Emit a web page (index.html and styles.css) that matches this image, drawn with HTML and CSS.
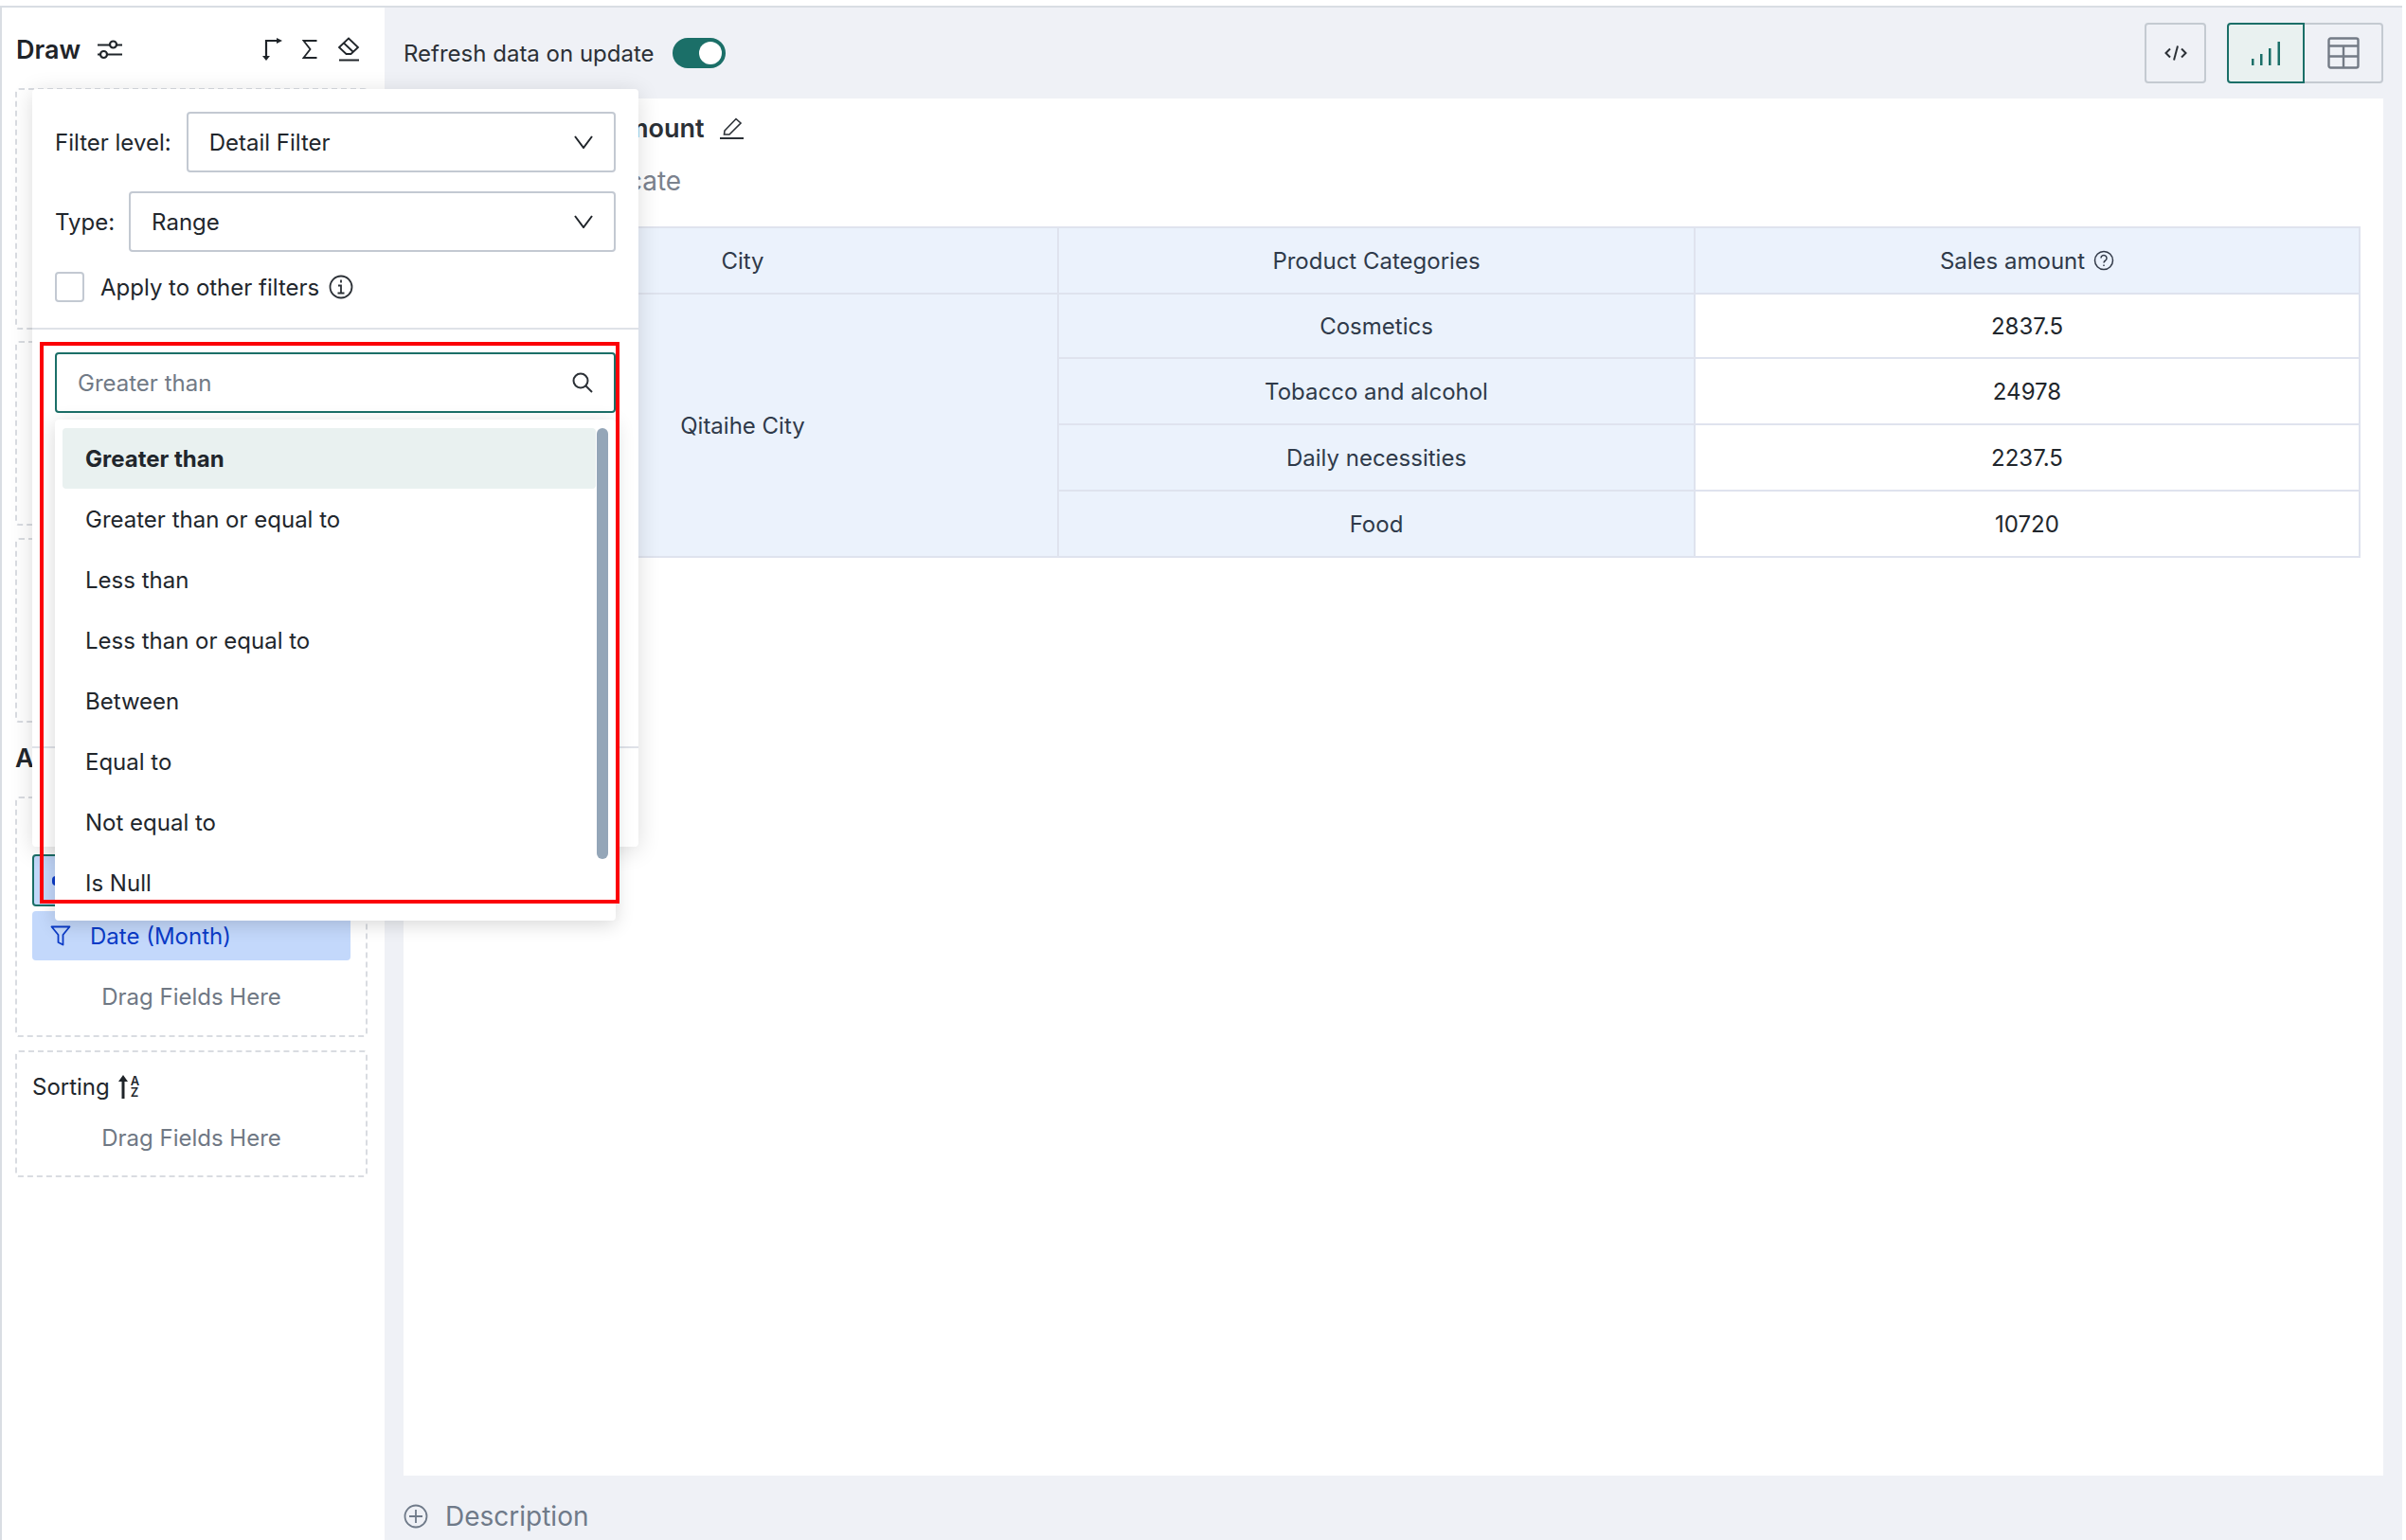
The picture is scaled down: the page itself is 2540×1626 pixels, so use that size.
FILE: index.html
```html
<!DOCTYPE html>
<html lang="en">
<head>
<meta charset="utf-8">
<title>Draw</title>
<link rel="stylesheet" href="styles.css">
</head>
<body>
<div class="app">
  <aside class="side">
    <div class="side-head">
      <span class="draw">Draw</span>
      <svg class="i-tune" viewBox="0 0 26 21" width="26" height="21" fill="none" stroke="#1f2429" stroke-width="2.200"><path d="M0 5.500h13M20 5.500h6M0 15.500h3M10 15.500h16"/><circle cx="16.500" cy="5" r="3.500"/><circle cx="6.500" cy="15.500" r="3.500"/></svg>
      <span class="spacer"></span>
      <svg class="i-swap" viewBox="0 0 22 24" width="22" height="24" fill="none" stroke="#1f2429" stroke-width="2.200"><path d="M4 21V3h13"/><path d="M15 0l6 3-6 3z" fill="#1f2429" stroke="none"/><path d="M0 19l4 5 4-5z" fill="#1f2429" stroke="none"/></svg>
      <svg class="i-sum" viewBox="0 0 16 22" width="16" height="22" fill="none" stroke="#1f2429" stroke-width="1.800"><path d="M15.500 2H1.500l7 9-7 9h14"/></svg>
      <svg class="i-erase" viewBox="0 0 24 26" width="24" height="26" fill="none" stroke="#1f2429" stroke-width="1.800"><path d="M12 1.500l10 9.500-7.500 7h-5L2 11zM7 6.500l10 9.500"/><path d="M2 24.500h21" stroke-width="2"/></svg>
    </div>
    <div class="well well-1"></div>
    <div class="well well-2"></div>
    <div class="well well-3"></div>
    <div class="section">A</div>
    <div class="well well-4">
      <div class="chip chip-active"><i class="dot"></i></div>
      <div class="chip">
        <svg viewBox="0 0 22 22" width="22" height="22" fill="none" stroke="#0b3bc7" stroke-width="1.800" stroke-linejoin="round"><path d="M1.500 1.500h19L13.500 10v10.500l-5-2.500V10z"/></svg>
        <span>Date (Month)</span>
      </div>
      <div class="drag">Drag Fields Here</div>
    </div>
    <div class="well well-5">
      <div class="sorting">
        <span>Sorting</span>
        <svg class="i-up" viewBox="0 0 10 25" width="10" height="25" fill="#1f2429"><path d="M3.500 25V7H0L5 0l5 7H6.500v18z"/></svg>
        <span class="az"><b>A</b><b>Z</b></span>
      </div>
      <div class="drag">Drag Fields Here</div>
    </div>
  </aside>

  <main class="main">
    <div class="top">
      <span class="refresh">Refresh data on update</span>
      <span class="toggle"><i></i></span>
      <span class="spacer"></span>
      <button class="btn btn-code">
        <svg viewBox="0 0 24 16" width="24" height="16" fill="none" stroke="#2b3036" stroke-width="2"><path d="M6 3.500L1.500 8 6 12.500M18 3.500L22.500 8 18 12.500"/><path d="M14 .5L10 15.500"/></svg>
      </button>
      <button class="btn btn-chart">
        <svg viewBox="0 0 30 25" width="30" height="25" fill="#1b6f68"><rect x="0" y="18" width="2.500" height="7"/><rect x="9" y="13" width="2.500" height="12"/><rect x="18" y="7" width="2.500" height="18"/><rect x="27.500" y="0" width="2.500" height="25"/></svg>
      </button>
      <button class="btn btn-table">
        <svg viewBox="0 0 34 34" width="34" height="34" fill="none" stroke="#747b86" stroke-width="2.400"><rect x="1.500" y="1.500" width="31" height="31" rx="2"/><path d="M1.500 9.500h31M1.500 20.500h31M17 9.500v23"/></svg>
      </button>
    </div>
    <div class="content">
      <div class="title-row">
        <span class="title">Monthly Sales amount</span>
        <svg viewBox="0 0 26 24" width="26" height="24" fill="none" stroke="#2b3036" stroke-width="1.600"><path d="M5 15L17 2.500l5 4.500L10 19H4.500z"/><path d="M0 23h25" stroke-width="2"/></svg>
      </div>
      <div class="subtitle">Click to add indicate</div>
      <table class="grid">
        <colgroup><col class="c1"><col class="c2"><col class="c3"></colgroup>
        <thead>
          <tr class="r-head"><th>City</th><th>Product Categories</th><th><span class="amount">Sales amount
            <svg viewBox="0 0 22 22" width="22" height="22" fill="none" stroke="#323a48" stroke-width="1.500"><circle cx="11" cy="11" r="9.500"/><path d="M8 8.500a3 3 0 1 1 4.700 2.500c-1.100.7-1.700 1.300-1.700 2.500"/><path d="M11 15.500v1.500"/></svg></span></th></tr>
        </thead>
        <tbody>
          <tr class="r-1"><th rowspan="4">Qitaihe City</th><th>Cosmetics</th><td>2837.5</td></tr>
          <tr class="r-n"><th>Tobacco and alcohol</th><td>24978</td></tr>
          <tr class="r-n"><th>Daily necessities</th><td>2237.5</td></tr>
          <tr class="r-n"><th>Food</th><td>10720</td></tr>
        </tbody>
      </table>
    </div>
    <div class="desc">
      <svg viewBox="0 0 26 26" width="26" height="26" fill="none" stroke="#6f7a89" stroke-width="1.800"><circle cx="13" cy="13" r="11.500"/><path d="M13 6v14M6 13h14"/></svg>
      <span>Description</span>
    </div>
  </main>
</div>

<section class="pop">
  <div class="pop-form">
    <div class="pop-row">
      <label>Filter level:</label>
      <div class="select"><span>Detail Filter</span><svg viewBox="0 0 20 14" width="20" height="14" fill="none" stroke="#1f2429" stroke-width="2"><path d="M1 1l9 12 9-12"/></svg></div>
    </div>
    <div class="pop-row pop-row-type">
      <label>Type:</label>
      <div class="select"><span>Range</span><svg viewBox="0 0 20 14" width="20" height="14" fill="none" stroke="#1f2429" stroke-width="2"><path d="M1 1l9 12 9-12"/></svg></div>
    </div>
    <div class="apply">
      <span class="check"></span>
      <span>Apply to other filters</span>
      <svg viewBox="0 0 26 26" width="26" height="26" fill="none" stroke="#2b3036" stroke-width="1.800"><circle cx="13" cy="13" r="11.500"/><path d="M13 5.500v3M10 11.500h3v8M9.500 19.500h7"/></svg>
    </div>
  </div>
</section>

<div class="search">
  <span>Greater than</span>
  <svg viewBox="0 0 22 22" width="22" height="22" fill="none" stroke="#2b3036" stroke-width="2"><circle cx="9" cy="9" r="7.500"/><path d="M14.500 14.500l6.500 6.500"/></svg>
</div>
<div class="menu">
  <ul class="menu-list">
    <li class="on">Greater than</li>
    <li>Greater than or equal to</li>
    <li>Less than</li>
    <li>Less than or equal to</li>
    <li>Between</li>
    <li>Equal to</li>
    <li>Not equal to</li>
    <li>Is Null</li>
  </ul>
  <i class="thumb"></i>
</div>
<div class="redbox"></div>
</body>
</html>
```
FILE: styles.css
```css
* { box-sizing: border-box; }
html, body { margin: 0; padding: 0; width: 2540px; height: 1626px; overflow: hidden; background: #fff; }
body { font-family: Inter, "Liberation Sans", sans-serif; font-size: 24px; color: #21262c; position: relative; }
button { font: inherit; padding: 0; background: none; }
.spacer { flex: 1; }

.app { display: flex; height: 1620px; margin-top: 6px; margin-right: 4px; border-top: 2px solid #d9dde3; border-left: 2px solid #d9dde3; }

.side { width: 404px; flex: none; background: #fff; padding: 0 18px 0 14px; }
.side-head { height: 85px; display: flex; align-items: center; padding: 3px 0 0 1px; }
.draw { font-size: 27px; font-weight: 600; color: #1f2429; }
.i-tune { margin-left: 18px; }
.i-swap { margin-right: 20px; }
.i-sum { margin-right: 21px; }
.i-erase { margin-right: 8px; }

.well { border: 2px dashed #d9dce1; border-radius: 4px; }
.well-1 { height: 255px; margin-bottom: 12px; }
.well-2 { height: 195px; margin-bottom: 13px; }
.well-3 { height: 195px; }
.section { font-size: 27px; font-weight: 600; height: 78px; line-height: 76px; }
.well-4 { height: 254px; margin-bottom: 14px; padding: 59px 16px 0; }
.well-5 { height: 134px; }

.chip { height: 52px; width: 336px; background: #c3d8fb; color: #0b3bc7; border-radius: 4px; display: flex; align-items: center; padding-left: 19px; gap: 20px; margin-bottom: 5px; font-size: 24px; }
.chip-active { height: 55px; border: 2px solid #1b6f68; position: relative; }
.dot { width: 8px; height: 10px; border-radius: 4px; background: #0b3bc7; }
.drag { color: #6f7884; text-align: center; font-size: 24px; height: 62px; line-height: 62px; margin-top: 8px; }
.well-5 .drag { margin-top: 0; height: 38px; line-height: 38px; }
.sorting { display: flex; align-items: center; height: 72px; padding-left: 16px; gap: 8px; font-size: 24px; }
.i-up { margin-left: 1px; margin-right: -5px; }
.az { display: flex; flex-direction: column; font-size: 13px; line-height: 12px; }
.az b { font-weight: 600; }

.main { flex: 1; background: #eff1f6; display: flex; flex-direction: column; padding: 0 20px; }
.top { height: 96px; flex: none; display: flex; align-items: center; }
.refresh { font-size: 24px; color: #2b3036; }
.toggle { width: 56px; height: 32px; border-radius: 16px; background: #1b6f68; margin-left: 19px; display: flex; justify-content: flex-end; align-items: center; padding-right: 4px; }
.toggle i { width: 24px; height: 24px; border-radius: 50%; background: #fff; }
.btn { height: 64px; border: 2px solid #c4cad1; display: flex; align-items: center; justify-content: center; }
.btn-code { width: 65px; border-radius: 4px; margin-right: 22px; }
.btn-chart { width: 82px; border: 2px solid #1b6f68; border-radius: 4px 0 0 4px; background: #e9f1f0; }
.btn-table { width: 83px; border-left: 0; border-radius: 0 4px 4px 0; }

.content { height: 1454px; flex: none; background: #fff; padding: 0 24px; }
.title-row { height: 62px; display: flex; align-items: center; gap: 16px; padding-left: 3px; }
.title { font-size: 27px; font-weight: 600; color: #2b3036; white-space: nowrap; }
.subtitle { height: 73px; line-height: 50px; font-size: 28px; color: #7b828d; }

.grid { border-collapse: collapse; table-layout: fixed; width: 2042px; font-size: 24px; }
.grid th, .grid td { border: 2px solid #dfe3ee; padding: 0; text-align: center; font-weight: 400; }
.grid th { background: #ebf2fc; color: #2f3a4a; }
.grid td { background: #fff; color: #21262c; }
.c1 { width: 666px; }
.c2 { width: 672px; }
.r-head { height: 70px; }
.r-1 { height: 68px; }
.r-n { height: 70px; }
.amount { display: inline-flex; align-items: center; gap: 9px; }

.desc { flex: 1; display: flex; align-items: center; gap: 18px; color: #6f7a89; font-size: 28px; padding-top: 18px; }

.pop { position: absolute; left: 34px; top: 94px; width: 640px; height: 800px; background: #fff; border-radius: 4px; box-shadow: 0 4px 24px rgba(0, 0, 0, .14); }
.pop::after { content: ""; position: absolute; left: 0; right: 0; top: 694px; height: 2px; background: #dfe2e8; }
.pop-form { height: 254px; border-bottom: 2px solid #dfe2e8; padding: 24px 24px 0; }
.pop-row { display: flex; align-items: center; gap: 16px; margin-bottom: 20px; }
.pop-row-type { gap: 15px; }
.select { flex: 1; height: 64px; border: 2px solid #c3c9d2; border-radius: 4px; display: flex; align-items: center; justify-content: space-between; padding: 0 22px; }
.apply { display: flex; align-items: center; margin-top: 21px; }
.check { width: 31px; height: 32px; border: 2px solid #c3c9d2; border-radius: 4px; margin-right: 17px; }
.apply svg { margin-left: 10px; }

.search { position: absolute; left: 58px; top: 372px; width: 592px; height: 64px; border: 2px solid #1b6f68; border-radius: 4px; background: #fff; display: flex; align-items: center; justify-content: space-between; padding: 0 22px; color: #717a86; }
.menu { position: absolute; left: 58px; top: 443px; width: 592px; height: 529px; background: #fff; border-radius: 4px; box-shadow: 0 4px 20px rgba(0, 0, 0, .16); overflow: hidden; }
.menu-list { list-style: none; margin: 0; padding: 9px 0 0 8px; }
.menu-list li { width: 563px; height: 64px; line-height: 66px; padding-left: 24px; border-radius: 4px; }
.menu-list .on { background: #e9f1f0; font-weight: 700; }
.thumb { position: absolute; left: 572px; top: 9px; width: 12px; height: 455px; border-radius: 6px; background: #94a6b8; }
.redbox { position: absolute; left: 42px; top: 361px; width: 612px; height: 593px; border: 4px solid #fb0007; }
```
